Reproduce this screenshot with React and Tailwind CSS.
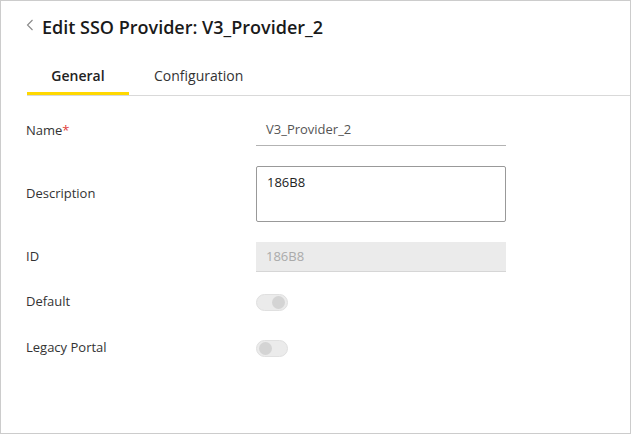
import React from "react";

const font = { fontFamily: '"Open Sans", "Noto Sans", sans-serif' };

function Toggle({ on }) {
  return (
    <div className="w-[32px] h-[17px] rounded-full bg-[#ebebeb] border border-[#e0e0e0] flex items-center px-[2px]">
      <div className={`w-[13px] h-[13px] rounded-full bg-[#d4d4d4] ${on ? "ml-auto" : ""}`} />
    </div>
  );
}

function Row({ label, required, children, className = "" }) {
  return (
    <div className={`flex items-center ${className}`}>
      <div className="w-[230px] text-[13px] text-[#333]">
        {label}
        {required && <span className="text-[#e0403a]">*</span>}
      </div>
      {children}
    </div>
  );
}

export default function App() {
  return (
    <div className="w-[631px] h-[434px] border border-[#cccccc] bg-white text-[#222]" style={font}>
      <div className="flex items-center pl-[25px] pt-[13px] h-[38px]">
        <svg width="8" height="12" viewBox="0 0 8 12" className="mr-[8px] mt-[-3px]">
          <path d="M6.5 1 L1.5 6 L6.5 11" fill="none" stroke="#888" strokeWidth="1.1" />
        </svg>
        <h1 className="text-[18px] leading-[24px] font-semibold text-[#1a1a1a]">
          Edit SSO Provider: V3_Provider_2
        </h1>
      </div>

      <div className="ml-[26px] mt-[17px] flex border-b border-[#d9d9d9] h-[40px]">
        <div className="w-[102px] flex items-center justify-center border-b-[3px] border-[#ffd800] text-[14px] font-semibold text-[#222] pt-[2px]">
          General
        </div>
        <div className="pl-[25px] flex items-center text-[14px] text-[#333] pb-[1px]">
          Configuration
        </div>
      </div>

      <div className="pl-[25px] pt-[19px]">
        <Row label="Name" required>
          <div className="w-[250px] h-[31px] border-b border-[#b3b3b3] flex items-center pl-[10px] text-[13px] text-[#555]">
            V3_Provider_2
          </div>
        </Row>

        <Row label="Description" className="mt-[20px]">
          <div className="w-[250px] h-[56px] border border-[#999] rounded-[2px] pl-[10px] pt-[6px] text-[13px] text-[#222]">
            186B8
          </div>
        </Row>

        <Row label="ID" className="mt-[20px]">
          <div className="w-[250px] h-[30px] bg-[#ebebeb] border-b border-[#d6d6d6] flex items-center pl-[10px] text-[13px] text-[#aaa]">
            186B8
          </div>
        </Row>

        <Row label="Default" className="mt-[15px] h-[30px]">
          <Toggle on />
        </Row>

        <Row label="Legacy Portal" className="mt-[16px] h-[30px]">
          <Toggle />
        </Row>
      </div>
    </div>
  );
}
